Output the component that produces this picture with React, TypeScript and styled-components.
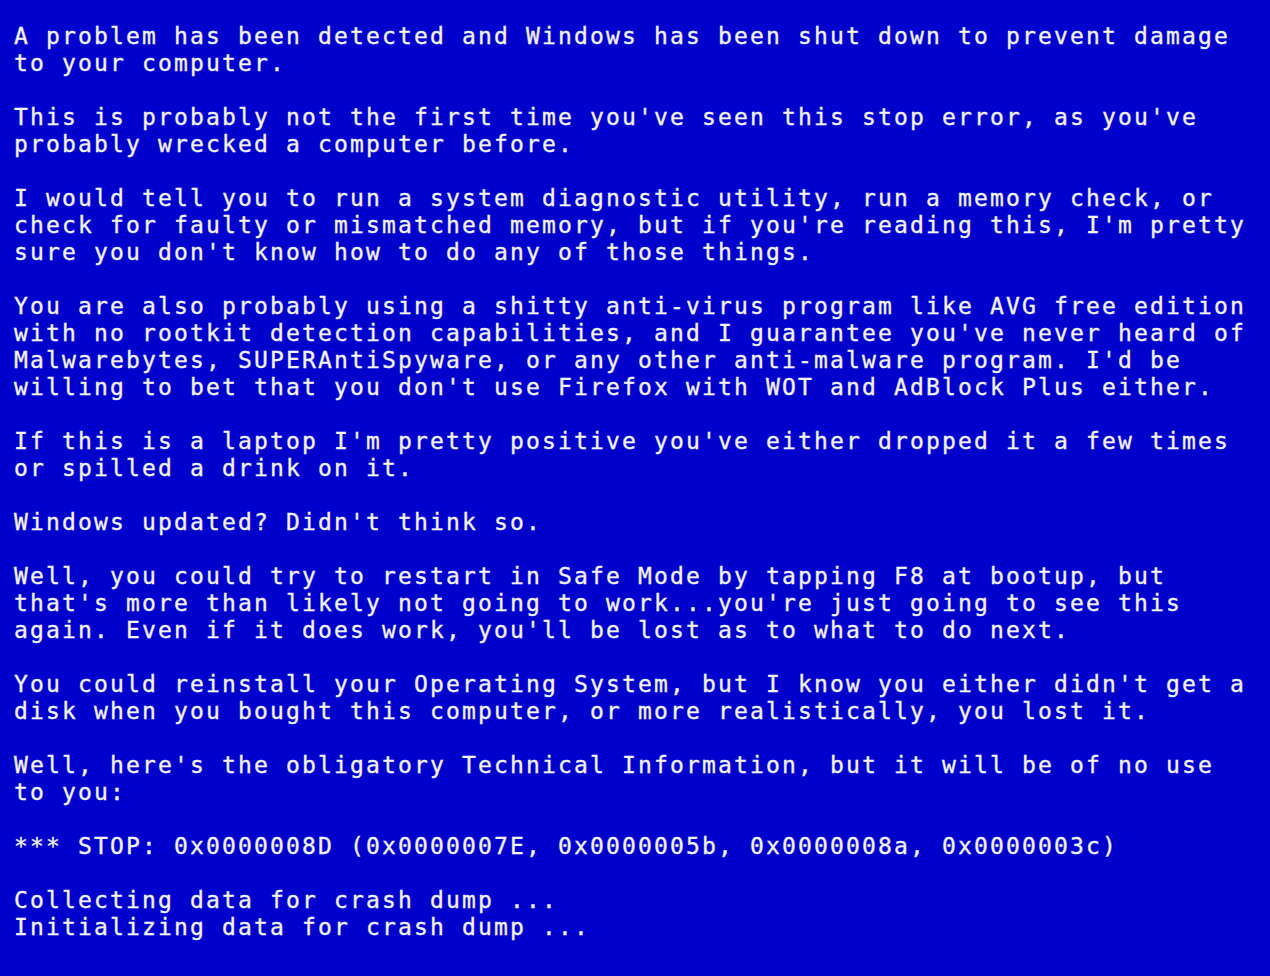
import React from "react";
import styled, { createGlobalStyle } from "styled-components";

const GlobalStyle = createGlobalStyle`
  html, body {
    margin: 0;
    padding: 0;
    background: #0000cc;
  }
  #root {
    min-height: 100vh;
  }
`;

const Screen = styled.main`
  box-sizing: border-box;
  min-height: 100vh;
  padding: 23px 0 0 14px;
  background: #0000cc;
  color: #f2f2f2;
  font-family: "DejaVu Sans Mono", "Liberation Mono", monospace;
  font-size: 23px;
  line-height: 27px;
  letter-spacing: 2.153px;
  -webkit-text-stroke: 0.35px #f2f2f2;
  display: flex;
  flex-direction: column;
  gap: 27px;
`;

const Paragraph = styled.p`
  margin: 0;
  white-space: pre;
`;

const Line = styled.span`
  display: block;
`;

const paragraphs: string[][] = [
  [
    "A problem has been detected and Windows has been shut down to prevent damage",
    "to your computer.",
  ],
  [
    "This is probably not the first time you've seen this stop error, as you've",
    "probably wrecked a computer before.",
  ],
  [
    "I would tell you to run a system diagnostic utility, run a memory check, or",
    "check for faulty or mismatched memory, but if you're reading this, I'm pretty",
    "sure you don't know how to do any of those things.",
  ],
  [
    "You are also probably using a shitty anti-virus program like AVG free edition",
    "with no rootkit detection capabilities, and I guarantee you've never heard of",
    "Malwarebytes, SUPERAntiSpyware, or any other anti-malware program. I'd be",
    "willing to bet that you don't use Firefox with WOT and AdBlock Plus either.",
  ],
  [
    "If this is a laptop I'm pretty positive you've either dropped it a few times",
    "or spilled a drink on it.",
  ],
  ["Windows updated? Didn't think so."],
  [
    "Well, you could try to restart in Safe Mode by tapping F8 at bootup, but",
    "that's more than likely not going to work...you're just going to see this",
    "again. Even if it does work, you'll be lost as to what to do next.",
  ],
  [
    "You could reinstall your Operating System, but I know you either didn't get a",
    "disk when you bought this computer, or more realistically, you lost it.",
  ],
  [
    "Well, here's the obligatory Technical Information, but it will be of no use",
    "to you:",
  ],
  ["*** STOP: 0x0000008D (0x0000007E, 0x0000005b, 0x0000008a, 0x0000003c)"],
  ["Collecting data for crash dump ...", "Initializing data for crash dump ..."],
];

export default function App() {
  return (
    <>
      <GlobalStyle />
      <Screen>
        {paragraphs.map((lines, i) => (
          <Paragraph key={i}>
            {lines.map((line, j) => (
              <Line key={j}>{line}</Line>
            ))}
          </Paragraph>
        ))}
      </Screen>
    </>
  );
}
